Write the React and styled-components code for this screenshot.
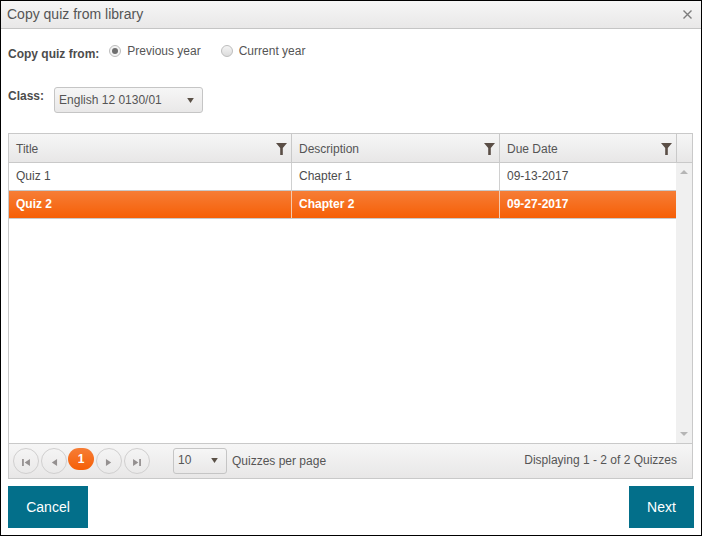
import React from 'react';
import styled, { createGlobalStyle } from 'styled-components';

const Global = createGlobalStyle`
  html, body { margin: 0; padding: 0; background: #fff; }
  body { font-family: "Liberation Sans", Arial, sans-serif; font-size: 12px; color: #4c4c4c; }
`;

const Dialog = styled.div`
  width: 702px;
  height: 536px;
  box-sizing: border-box;
  border: 1px solid #000;
  display: flex;
  flex-direction: column;
  background: #fff;
`;

const TitleBar = styled.div`
  height: 28px;
  flex: none;
  box-sizing: border-box;
  border-bottom: 1px solid #c5c5c5;
  background: linear-gradient(#f6f6f6, #e9e8e8);
  display: flex;
  align-items: center;
  justify-content: space-between;
  padding: 0 9px 2px 6px;
  font-size: 14px;
  color: #555;
`;

const Body = styled.div`
  flex: 1;
  display: flex;
  flex-direction: column;
  padding: 0 7px 7px 7px;
  min-height: 0;
`;

const CopyRow = styled.div`
  display: flex;
  align-items: flex-start;
  height: 58px;
  padding-top: 15px;
  box-sizing: border-box;
`;

const FieldLabel = styled.label`
  font-weight: bold;
  color: #4c4c4c;
  font-size: 12px;
  line-height: 14px;
  margin-top: ${(p) => p.$top || 0}px;
`;

const RadioItem = styled.div`
  display: flex;
  align-items: center;
  margin-left: ${(p) => p.$gap}px;
  line-height: 14px;
  color: #555;
`;

const RadioDot = styled.span`
  width: 12px;
  height: 12px;
  box-sizing: border-box;
  border-radius: 50%;
  border: 1px solid #bdbdbd;
  background: ${(p) => (p.$on ? '#f4f4f4' : 'linear-gradient(#f4f4f4, #dcdcdc)')};
  margin-right: 6px;
  display: flex;
  align-items: center;
  justify-content: center;
  &::after {
    content: '';
    display: ${(p) => (p.$on ? 'block' : 'none')};
    width: 6px;
    height: 6px;
    border-radius: 50%;
    background: #6f6f6f;
  }
`;

const ClassRow = styled.div`
  display: flex;
  align-items: flex-start;
  height: 46px;
`;

const Select = styled.div`
  width: ${(p) => p.$w}px;
  height: ${(p) => p.$h}px;
  box-sizing: border-box;
  flex: none;
  border: 1px solid #c5c5c5;
  border-radius: 3px;
  background: linear-gradient(#f6f6f6, #e9e8e8);
  display: flex;
  align-items: center;
  justify-content: space-between;
  padding: 0 ${(p) => p.$pr}px ${(p) => p.$pb || 0}px 4px;
  color: #555;
  margin-left: ${(p) => p.$ml}px;
`;

const Caret = styled.svg`
  width: 7px;
  height: 5px;
  flex: none;
  fill: #5a5046;
`;

const Grid = styled.div`
  flex: none;
  width: 685px;
  height: 346px;
  box-sizing: border-box;
  border: 1px solid #c9c9c9;
  display: flex;
  flex-direction: column;
`;

const HeaderRow = styled.div`
  height: 29px;
  flex: none;
  box-sizing: border-box;
  display: grid;
  grid-template-columns: 283px 208px 177px 1fr;
  border-bottom: 1px solid #c9c9c9;
  background: linear-gradient(#f6f6f6, #e8e7e7);
`;

const HeaderCell = styled.div`
  box-sizing: border-box;
  border-right: 1px solid #c9c9c9;
  display: flex;
  align-items: center;
  justify-content: space-between;
  padding: 2px 4px 0 7px;
  color: #555;
  &:last-child { border-right: none; }
`;

const Content = styled.div`
  flex: 1;
  min-height: 0;
  display: flex;
`;

const Rows = styled.div`
  flex: 1;
  min-width: 0;
`;

const Row = styled.div`
  display: grid;
  grid-template-columns: 283px 208px 1fr;
  height: 28px;
  box-sizing: border-box;
  border-bottom: 1px solid #c9c9c9;
  background: ${(p) => (p.$selected ? 'linear-gradient(#f67d36, #f65f06)' : '#fff')};
  color: ${(p) => (p.$selected ? '#fff' : '#4c4c4c')};
  font-weight: ${(p) => (p.$selected ? 'bold' : 'normal')};
`;

const Cell = styled.div`
  box-sizing: border-box;
  display: flex;
  align-items: center;
  padding: 0 0 2px 7px;
  border-right: 1px solid ${(p) => (p.$selected ? '#f5c9ad' : '#d0d0d0')};
  &:last-child { border-right: none; }
`;

const Scrollbar = styled.div`
  width: 16px;
  flex: none;
  background: #f0f0f0;
  display: flex;
  flex-direction: column;
  justify-content: space-between;
  align-items: center;
  padding: 7px 0 7px;
  box-sizing: border-box;
`;

const ScrollArrow = styled.svg`
  width: 8px;
  height: 4px;
  fill: #b5b5b5;
`;

const Pager = styled.div`
  height: 35px;
  flex: none;
  box-sizing: border-box;
  border-top: 1px solid #c9c9c9;
  background: linear-gradient(#f6f6f6, #e8e7e7);
  display: flex;
  align-items: center;
  padding: 0 15px 0 4px;
  color: #555;
`;

const PageButton = styled.div`
  width: 26px;
  height: 26px;
  box-sizing: border-box;
  flex: none;
  border-radius: 50%;
  border: 1px solid #d0cfcf;
  margin-right: 2px;
  display: flex;
  align-items: center;
  justify-content: center;
  &:nth-child(2) { margin-right: 1px; }
`;

const ActivePage = styled.div`
  width: 26px;
  height: 22px;
  flex: none;
  margin: -4px 2px 0 0;
  border-radius: 11px;
  background: linear-gradient(#f67d36, #f65f06);
  color: #fff;
  font-weight: bold;
  display: flex;
  align-items: center;
  justify-content: center;
`;

const PagerIcon = styled.svg`
  width: 8px;
  height: 7px;
  margin-top: 2px;
  fill: #949090;
`;

const PerPage = styled.span`
  margin-left: 5px;
  flex: 1;
`;

const Displaying = styled.span`
  padding-bottom: 2px;
`;

const Footer = styled.div`
  flex: 1;
  display: flex;
  justify-content: space-between;
  align-items: flex-end;
`;

const Button = styled.button`
  width: ${(p) => p.$w}px;
  height: 42px;
  border: none;
  padding: 0;
  background: #036f8a;
  color: #fff;
  font: 14px "Liberation Sans", Arial, sans-serif;
`;

const Close = styled.svg`
  width: 9px;
  height: 9px;
  margin-top: 2px;
  stroke: #7d7d7d;
  stroke-width: 1.4;
`;

const Filter = () => (
  <svg width="11" height="12" viewBox="0 0 11 12" fill="#5a4e46">
    <path d="M0 0h11L6.8 5v7H4.2V5z" />
  </svg>
);

const First = () => <PagerIcon viewBox="0 0 9 8"><path d="M0 0h2v8H0zM9 0v8L3 4z" /></PagerIcon>;
const Prev = () => <PagerIcon viewBox="0 0 9 8"><path d="M8 0v8L2 4z" /></PagerIcon>;
const Next = () => <PagerIcon viewBox="0 0 9 8"><path d="M1 0v8l6-4z" /></PagerIcon>;
const Last = () => <PagerIcon viewBox="0 0 9 8"><path d="M0 0v8l6-4zM7 0h2v8H7z" /></PagerIcon>;

const quizzes = [
  { title: 'Quiz 1', description: 'Chapter 1', due: '09-13-2017' },
  { title: 'Quiz 2', description: 'Chapter 2', due: '09-27-2017', selected: true },
];

const DownCaret = () => (
  <Caret viewBox="0 0 8 6"><path d="M0 0h8L4 6z" /></Caret>
);

export default function App() {
  return (
    <Dialog>
      <Global />
      <TitleBar>
        <span>Copy quiz from library</span>
        <Close viewBox="0 0 9 9"><path d="M.5.5l8 8M8.5.5l-8 8" /></Close>
      </TitleBar>
      <Body>
        <CopyRow>
          <FieldLabel $top={3}>Copy quiz from:</FieldLabel>
          <RadioItem $gap={10}><RadioDot $on />Previous year</RadioItem>
          <RadioItem $gap={20}><RadioDot />Current year</RadioItem>
        </CopyRow>
        <ClassRow>
          <FieldLabel $top={2}>Class:</FieldLabel>
          <Select $w={149} $h={26} $ml={10} $pr={8}>
            English 12 0130/01
            <DownCaret />
          </Select>
        </ClassRow>
        <Grid>
          <HeaderRow>
            <HeaderCell>Title<Filter /></HeaderCell>
            <HeaderCell>Description<Filter /></HeaderCell>
            <HeaderCell>Due Date<Filter /></HeaderCell>
            <HeaderCell />
          </HeaderRow>
          <Content>
            <Rows>
              {quizzes.map((q) => (
                <Row key={q.title} $selected={q.selected}>
                  <Cell $selected={q.selected}>{q.title}</Cell>
                  <Cell $selected={q.selected}>{q.description}</Cell>
                  <Cell $selected={q.selected}>{q.due}</Cell>
                </Row>
              ))}
            </Rows>
            <Scrollbar>
              <ScrollArrow viewBox="0 0 8 4"><path d="M0 4h8L4 0z" /></ScrollArrow>
              <ScrollArrow viewBox="0 0 8 4"><path d="M0 0h8L4 4z" /></ScrollArrow>
            </Scrollbar>
          </Content>
          <Pager>
            <PageButton><First /></PageButton>
            <PageButton><Prev /></PageButton>
            <ActivePage>1</ActivePage>
            <PageButton><Next /></PageButton>
            <PageButton><Last /></PageButton>
            <Select $w={54} $h={26} $ml={21} $pr={8} $pb={2}>
              10
              <DownCaret />
            </Select>
            <PerPage>Quizzes per page</PerPage>
            <Displaying>Displaying 1 - 2 of 2 Quizzes</Displaying>
          </Pager>
        </Grid>
        <Footer>
          <Button $w={80}>Cancel</Button>
          <Button $w={65}>Next</Button>
        </Footer>
      </Body>
    </Dialog>
  );
}
